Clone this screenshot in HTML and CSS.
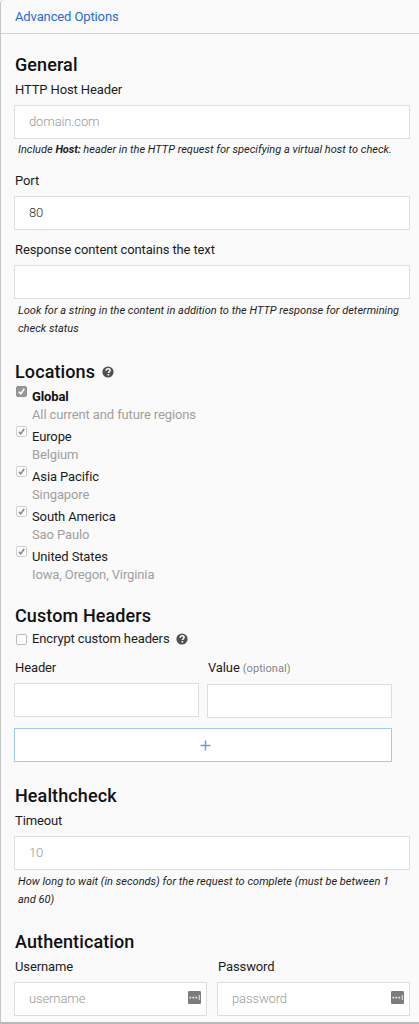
FILE: index.html
```html
<!DOCTYPE html>
<html lang="en">
<head>
<meta charset="utf-8">
<title>Advanced Options</title>
<link rel="stylesheet" href="styles.css">
</head>
<body>
<svg class="defs" width="0" height="0" aria-hidden="true">
  <symbol id="help" viewBox="0 0 12 12"><circle cx="6" cy="6" r="5.6" fill="#505050"/><path d="M4.1 4.7C4.1 3.4 5 2.8 6.1 2.8s2 .7 2 1.7c0 1.3-1.7 1.4-1.7 2.5" fill="none" stroke="#fff" stroke-width="1.5"/><rect x="5.6" y="8" width="1.6" height="1.5" fill="#fff"/></symbol>
  <symbol id="tick" viewBox="0 0 11 11"><path d="M2.8 5.7l2 2.1 3.5-5" fill="none" stroke="currentColor" stroke-width="1.5"/></symbol>
  <symbol id="keys" viewBox="0 0 13 13"><rect width="13" height="13" rx="1.2" fill="#7c7c7c"/><path d="M1.5 5.7h1.7v1.7h-1.7zM4.5 5.7h1.7v1.7h-1.7zM7.5 5.7h1.7v1.7h-1.7zM10.8 4h1v5h-1z" fill="#ececec"/></symbol>
</svg>
<main class="panel">
  <header class="bar"><a class="link">Advanced Options</a></header>
  <form class="form">
    <section class="general">
      <h2>General</h2>
      <label>HTTP Host Header</label>
      <div class="input placeholder">domain.com</div>
      <p class="hint">Include <b>Host:</b> header in the HTTP request for specifying a virtual host to check.</p>
      <label class="port">Port</label>
      <div class="input">80</div>
      <label class="response">Response content contains the text</label>
      <div class="input"></div>
      <p class="hint long">Look for a string in the content in addition to the HTTP response for determining check status</p>
    </section>
    <section class="locations">
      <h2>Locations <svg class="help"><use href="#help"/></svg></h2>
      <div class="region"><span class="check on"><svg><use href="#tick"/></svg></span><div><b>Global</b><small>All current and future regions</small></div></div>
      <div class="region"><span class="check"><svg><use href="#tick"/></svg></span><div><span>Europe</span><small>Belgium</small></div></div>
      <div class="region"><span class="check"><svg><use href="#tick"/></svg></span><div><span>Asia Pacific</span><small>Singapore</small></div></div>
      <div class="region"><span class="check"><svg><use href="#tick"/></svg></span><div><span>South America</span><small>Sao Paulo</small></div></div>
      <div class="region"><span class="check"><svg><use href="#tick"/></svg></span><div><span>United States</span><small>Iowa, Oregon, Virginia</small></div></div>
    </section>
    <section class="headers">
      <h2>Custom Headers</h2>
      <div class="encrypt"><span class="check empty"></span><span>Encrypt custom headers</span><svg class="help"><use href="#help"/></svg></div>
      <div class="pair">
        <div><label>Header</label><div class="input"></div></div>
        <div class="value"><label>Value <span class="optional">(optional)</span></label><div class="input"></div></div>
      </div>
      <div class="add"><svg width="11" height="11" viewBox="0 0 11 11"><path d="M5.5 .5v10M.5 5.5h10" stroke="#6b9cf0" stroke-width="1.5"/></svg></div>
    </section>
    <section class="health">
      <h2>Healthcheck</h2>
      <label>Timeout</label>
      <div class="input placeholder">10</div>
      <p class="hint long">How long to wait (in seconds) for the request to complete (must be between 1 and 60)</p>
    </section>
    <section class="auth">
      <h2>Authentication</h2>
      <div class="credentials">
        <div><label>Username</label><div class="input placeholder">username<svg class="keys"><use href="#keys"/></svg></div></div>
        <div><label>Password</label><div class="input placeholder">password<svg class="keys"><use href="#keys"/></svg></div></div>
      </div>
    </section>
  </form>
</main>
</body>
</html>
```
FILE: styles.css
```css
* { box-sizing: border-box; }
body { margin: 0; background: #fafafa; color: #1c1c1c; font: 13px/18px Roboto, sans-serif; letter-spacing: -.12px; }
.defs { display: none; }
.panel { height: 1024px; overflow: hidden; border-left: 1px solid #c6c6c6; border-bottom: 2px solid #b8b8b8; border-top-left-radius: 4px; }
.bar { height: 34px; padding: 8px 14px 0; border-bottom: 1px solid #d2d2d2; }
.link { color: #2a69d8; }
.form { padding: 19px 9px 0 13px; }
h2 { display: flex; align-items: center; margin: 0; height: 24px; font-size: 18px; line-height: 24px; font-weight: 500; color: #111; letter-spacing: .1px; padding-left: 1px; }
label { display: block; height: 18px; padding-left: 1px; }
.input { display: flex; align-items: center; height: 34px; padding: 0 5px 0 14px; background: #fff; border: 1px solid #dedede; color: #333; font-weight: 300; }
.placeholder { color: #999; }
.hint { height: 18px; margin: 2px 0 0; padding-left: 4px; font-size: 11px; line-height: 18px; font-style: italic; letter-spacing: .02px; }
.hint.long { height: 36px; margin-top: 3px; padding-right: 8px; }
.hint b { letter-spacing: -.1px; }
.help { width: 12px; height: 12px; margin-left: 7px; }
.general { height: 306px; }
.general h2, .health h2, .auth h2 { margin-bottom: 4px; }
.general label, .health label { margin-bottom: 6px; }
.general .port { margin-top: 13px; }
.general .response { margin-top: 11px; }
.locations { height: 245px; }
.locations h2 { margin-bottom: 4px; padding-top: 2px; }
.region { display: flex; gap: 5px; height: 40.1px; padding-left: 2px; }
.region div { display: flex; flex-direction: column; padding-top: 1px; }
.region small { font-size: 13px; color: #a0a0a0; }
.region b { font-weight: 700; color: #111; }
.check { display: flex; width: 11px; height: 11px; background: #fdfdfd; border: 1px solid #d0d0d0; border-radius: 2px; color: #888; flex: none; }
.region .check { margin-top: -1px; }
.check svg { width: 11px; height: 11px; margin: -1px; flex: none; }
.check.on { background: #989898; border-color: #909090; color: #fff; }
.check.empty { background: #fff; border-color: #bbb; }
.headers { height: 180px; }
.encrypt { display: flex; align-items: center; height: 18px; padding-left: 2px; margin: 2px 0 11px; gap: 5px; }
.encrypt .help { margin-left: 1px; }
.pair { display: grid; grid-template-columns: 185px 185px; gap: 8px; }
.pair label { margin-bottom: 6px; }
.value .input { margin-top: 7px; }
.optional { font-size: 11px; color: #858585; letter-spacing: .05px; }
.add { display: flex; align-items: center; justify-content: center; width: 378px; height: 34px; margin-top: 10px; background: #fff; border: 1px solid #a6c5fa; padding-left: 4px; }
.health { height: 146px; }
.credentials { display: grid; grid-template-columns: 193px 193px; gap: 10px; }
.credentials label { margin-bottom: 6px; }
.keys { width: 13px; height: 13px; margin-left: auto; margin-bottom: 3px; }
```
